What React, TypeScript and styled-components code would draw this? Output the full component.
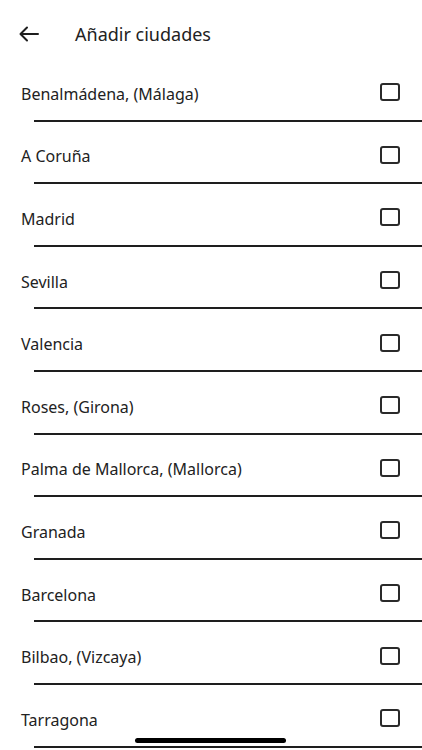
import React from 'react';
import styled, { createGlobalStyle } from 'styled-components';

const cities = [
  'Benalmádena, (Málaga)',
  'A Coruña',
  'Madrid',
  'Sevilla',
  'Valencia',
  'Roses, (Girona)',
  'Palma de Mallorca, (Mallorca)',
  'Granada',
  'Barcelona',
  'Bilbao, (Vizcaya)',
  'Tarragona',
];

const GlobalStyle = createGlobalStyle`
  body {
    margin: 0;
    background: #fff;
    font-family: "Noto Sans", "Open Sans", sans-serif;
    color: #222;
  }
`;

const Screen = styled.div`
  position: relative;
  width: 422px;
  height: 750px;
  overflow: hidden;
  background: #fff;
`;

const Header = styled.div`
  display: flex;
  align-items: center;
  height: 50px;
  padding: 9px 0 0 19px;
  gap: 36px;
`;

const BackButton = styled.button`
  display: flex;
  align-items: center;
  border: none;
  background: none;
  padding: 0;
  margin-top: -1px;
  color: #1e1e1e;
`;

const Title = styled.h1`
  margin: 0;
  font-size: 18px;
  font-weight: 400;
  color: #222;
`;

const List = styled.ul`
  list-style: none;
  margin: 0;
  padding: 0;
`;

const Row = styled.li`
  display: flex;
  flex-direction: column;
  height: 62.6px;
`;

const RowBody = styled.label`
  flex: 1;
  display: flex;
  align-items: center;
  justify-content: space-between;
  padding: 6px 22px 0 21px;
`;

const CityName = styled.span`
  font-size: 16px;
  color: #222;
  margin-top: 3px;
`;

const Checkbox = styled.span`
  width: 16px;
  height: 14px;
  border: 2px solid #2a2a2a;
  border-radius: 3px;
`;

const Divider = styled.div`
  height: 2px;
  margin-left: 34px;
  background: #1e1e1e;
`;

const HomeIndicator = styled.div`
  position: absolute;
  left: 135px;
  bottom: 7px;
  width: 151px;
  height: 5px;
  border-radius: 3px;
  background: #000;
`;

export default function App() {
  return (
    <Screen>
      <GlobalStyle />
      <Header>
        <BackButton aria-label="Volver">
          <svg width="20" height="16" viewBox="0 0 20 16" fill="none" stroke="currentColor" strokeWidth="2" strokeLinecap="round" strokeLinejoin="round">
            <path d="M19 8H2M8 1.5L1.5 8L8 14.5" />
          </svg>
        </BackButton>
        <Title>Añadir ciudades</Title>
      </Header>
      <List>
        {cities.map((c) => (
          <Row key={c}>
            <RowBody>
              <CityName>{c}</CityName>
              <Checkbox />
            </RowBody>
            <Divider />
          </Row>
        ))}
      </List>
      <HomeIndicator />
    </Screen>
  );
}
